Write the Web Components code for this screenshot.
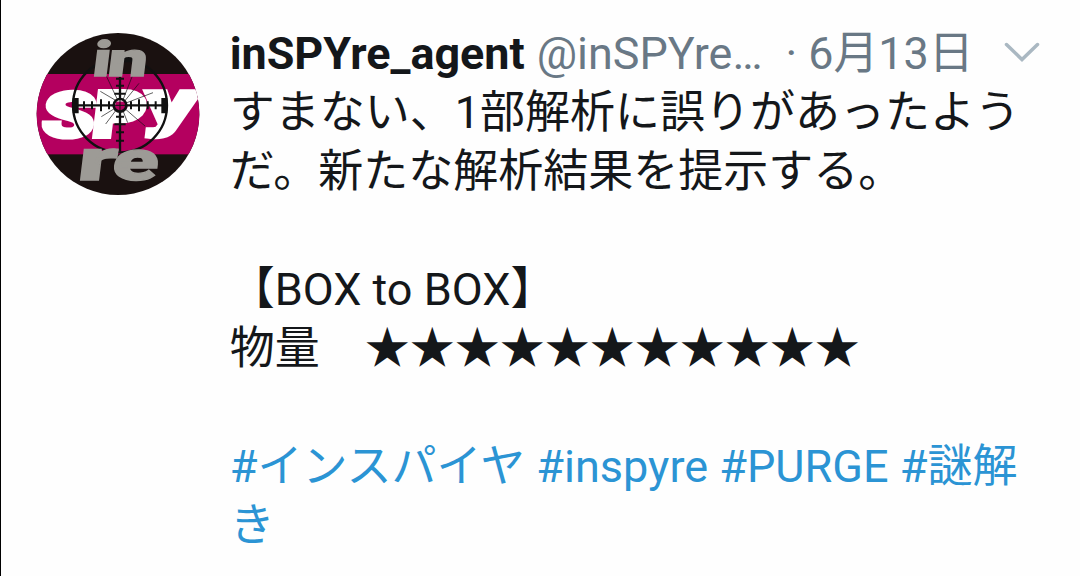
<!DOCTYPE html>
<html lang="ja">
<head>
<meta charset="utf-8">
<title>inSPYre_agent</title>
<style>
    body {
        margin: 0;
        background: #fefefe;
        font-family: Roboto, "Noto Sans CJK JP", sans-serif;
    }
</style>
</head>
<body>

<tweet-card name="inSPYre_agent" handle="@inSPYre…" date="6月13日">
    <spy-avatar slot="avatar"></spy-avatar>
    <tweet-text><p>すまない、1部解析に誤りがあったようだ。新たな解析結果を提示する。</p><p></p><p>【BOX to BOX】</p><p>物量　★★★★★★★★★★★</p><p></p><p><hash-tag>インスパイヤ</hash-tag> <hash-tag>inspyre</hash-tag> <hash-tag>PURGE</hash-tag> <hash-tag>謎解き</hash-tag></p></tweet-text>
</tweet-card>

<script>
class SpyAvatar extends HTMLElement {

    constructor() {
        super();
        this.root = this.attachShadow({ mode: 'open' });
    }

    connectedCallback() {
        this.render();
    }

    // ticks on both arms of the crosshair
    ticks() {
        let d = '';
        for (const x of [253, 277, 304, 328, 394, 418, 444, 468]) {
            const h = (x === 304 || x === 418) ? 18 : 12;
            d += `M${x} ${256 - h}V${256 + h}`;
        }
        for (const y of [176, 197, 221, 290, 313, 337, 362]) {
            const w = (y === 221 || y === 313) ? 17 : 12;
            d += `M${361 - w} ${y}H${361 + w}`;
        }
        return d;
    }

    letter(char, x, y, size, width) {
        return `<text transform="translate(${x} ${y}) skewX(-7)" font-size="${size}" textLength="${width}" lengthAdjust="spacingAndGlyphs">${char}</text>`;
    }

    render() {
        this.root.innerHTML = `
            <style>
                :host {
                    display: block;
                    width: 164px;
                    height: 162px;
                }
                svg {
                    display: block;
                    width: 100%;
                    height: 100%;
                }
                text {
                    font-family: Roboto, sans-serif;
                    font-weight: 900;
                    stroke-linejoin: miter;
                }
            </style>
            <svg viewBox="109 39 492 486">
                <defs><clipPath id="disc"><ellipse cx="355" cy="282" rx="244" ry="243"/></clipPath></defs>
                <g clip-path="url(#disc)">
                    <rect x="109" y="39" width="492" height="486" fill="#1a1110"/>
                    <rect x="109" y="162" width="492" height="241" fill="#b4005f"/>
                    <g fill="#fff" stroke="#fff" stroke-width="12">
                        ${this.letter('S', 121, 350, 188, 158)}
                        ${this.letter('P', 272, 351, 194, 160)}
                        ${this.letter('y', 429, 311, 186, 158)}
                    </g>
                    <g stroke="#111" fill="none">
                        <circle cx="361" cy="256" r="141" stroke-width="7"/>
                        <path d="M222 256H340M382 256H500M361 170V236M361 276V395" stroke-width="7"/>
                        <path d="${this.ticks()}" stroke-width="6"/>
                        <circle cx="361" cy="256" r="19" stroke-width="8"/>
                        <path d="M361 236V276M341 256H381" stroke-width="3"/>
                        <path d="M346 240L302 214M352 236L320 168M371 237L398 168M376 242L418 190M379 249L460 218M378 268L436 318M371 275L384 308M348 272L318 312M344 266L305 290" stroke-width="2"/>
                        <path d="M228 234V280M494 234V280" stroke-width="18"/>
                        <path d="M370 119H405" stroke-width="16"/>
                    </g>
                    <g fill="#9d9b96" stroke="#9d9b96" stroke-width="4">
                        ${this.letter('i', 275, 169, 146, 54)}
                        ${this.letter('n', 321, 169, 144, 118)}
                        ${this.letter('r', 230, 481, 174, 116)}
                        ${this.letter('e', 333, 480, 168, 138)}
                    </g>
                </g>
            </svg>
        `;
    }

}

class HashTag extends HTMLElement {

    constructor() {
        super();
        this.root = this.attachShadow({ mode: 'open' });
        this.root.innerHTML = `
            <style>
                :host {
                    display: inline;
                    color: #2b94d4;
                }
            </style>#<slot></slot>`;
    }

}

class TweetText extends HTMLElement {

    constructor() {
        super();
        this.root = this.attachShadow({ mode: 'open' });
        this.root.innerHTML = `
            <style>
                :host {
                    display: block;
                    font-size: 45px;
                    line-height: 59px;
                    color: #14171a;
                    word-break: break-all;
                    text-spacing-trim: space-all;
                }
                ::slotted(p) {
                    margin: 0;
                    min-height: 59px;
                }
            </style>
            <slot></slot>
        `;
    }

}

class TweetCard extends HTMLElement {

    constructor() {
        super();
        this.root = this.attachShadow({ mode: 'open' });
    }

    connectedCallback() {
        this.render();
    }

    render() {
        this.root.innerHTML = `
            <style>
                :host {
                    display: grid;
                    grid-template-columns: 164px 794px;
                    column-gap: 29.7px;
                    box-sizing: border-box;
                    height: 576px;
                    padding: 24px 0 0 35px;
                    border-left: 1px solid #000;
                    overflow: hidden;
                }
                .avatar {
                    padding-top: 9px;
                }
                header {
                    display: flex;
                    width: 810px;
                    height: 59px;
                    font-size: 44.9px;
                    line-height: 59px;
                    color: #697885;
                    white-space: nowrap;
                }
                b {
                    color: #14171a;
                    margin-right: 12px;
                }
                .dot {
                    margin: 0 11px 0 23px;
                }
                svg {
                    width: 36px;
                    height: 22px;
                    margin: 17px 0 0 auto;
                }
            </style>
            <div class="avatar"><slot name="avatar"></slot></div>
            <div>
                <header>
                    <b>${this.getAttribute('name')}</b>
                    <span>${this.getAttribute('handle')}</span>
                    <span class="dot">·</span>
                    <span>${this.getAttribute('date')}</span>
                    <svg viewBox="0 0 36 22"><path d="M2.500 3.500L18 18.500L33.500 3.500" fill="none" stroke="#aab8c2" stroke-width="3.500" stroke-linecap="round"/></svg>
                </header>
                <slot></slot>
            </div>
        `;
    }

}

customElements.define('spy-avatar', SpyAvatar);
customElements.define('hash-tag', HashTag);
customElements.define('tweet-text', TweetText);
customElements.define('tweet-card', TweetCard);
</script>
</body>
</html>
